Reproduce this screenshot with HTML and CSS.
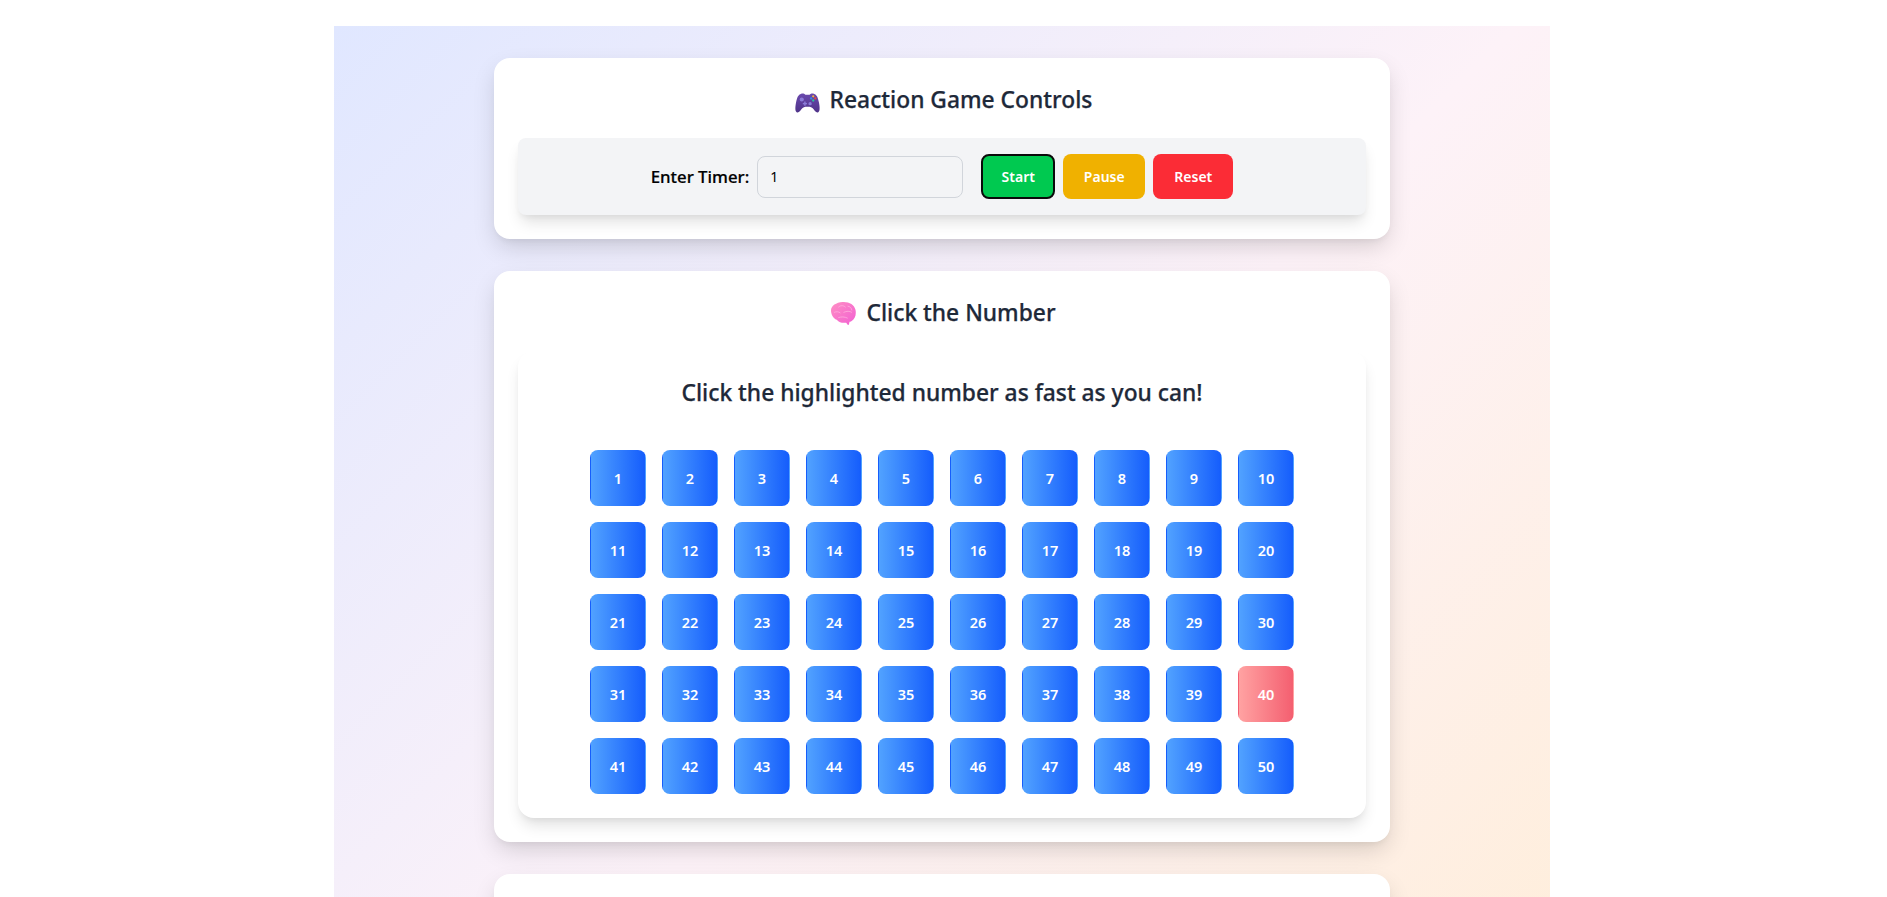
FILE: index.html
```html
<!DOCTYPE html>
<html lang="en">
<head>
<meta charset="utf-8">
<title>Reaction Game</title>
<link rel="stylesheet" href="styles.css">
</head>
<body>
<main class="page">
  <section class="card">
    <h2 class="title">
      <svg class="emoji" viewBox="0 0 24 24" aria-hidden="true">
        <defs>
          <linearGradient id="padFill" x1="0" y1="0" x2="0" y2="1">
            <stop offset="0" stop-color="#6a49ad"/>
            <stop offset="1" stop-color="#4f3389"/>
          </linearGradient>
        </defs>
        <path fill="url(#padFill)" d="M6 5.500C7.500 5 9 5.500 10 6.500h4C15 5.500 16.500 5 18 5.500C21 6.500 22 9 23 14C24 19 24 23 22 23.500C20 24 18.500 21 17 19.500C16 18.500 15 18 14 18h-4C9 18 8 18.500 7 19.500C5.500 21 4 24 2 23.500C0 23 0 19 1 14C2 9 3 6.500 6 5.500z"/>
        <circle cx="6.500" cy="11" r="2" fill="#8b7bd8"/>
        <circle cx="14.500" cy="15" r="1.600" fill="#8b7bd8"/>
        <rect x="7.500" y="14.300" width="4" height="1.400" fill="#8b7bd8"/>
        <rect x="8.800" y="13" width="1.400" height="4" fill="#8b7bd8"/>
        <circle cx="17.500" cy="8" r="1.100" fill="#f2b53c"/>
        <circle cx="15.500" cy="10" r="1.100" fill="#2f8fe8"/>
        <circle cx="19.500" cy="10" r="1.100" fill="#e8473f"/>
        <circle cx="17.500" cy="12" r="1.100" fill="#27c2a0"/>
      </svg>
      <span>Reaction Game Controls</span>
    </h2>
    <div class="controls">
      <label class="timer-label" for="timer">Enter Timer:</label>
      <input class="timer-input" id="timer" type="text" value="1">
      <button class="btn btn-start">Start</button>
      <button class="btn btn-pause">Pause</button>
      <button class="btn btn-reset">Reset</button>
    </div>
  </section>
  <section class="card">
    <h2 class="title">
      <svg class="emoji" viewBox="0 0 24 24" aria-hidden="true">
        <defs>
          <linearGradient id="brainFill" x1="0" y1="0" x2="1" y2="1">
            <stop offset="0" stop-color="#ff8fc4"/>
            <stop offset="1" stop-color="#f25fd2"/>
          </linearGradient>
        </defs>
        <path fill="url(#brainFill)" d="M11 1C17 .5 22.500 3.500 23.500 8.500C24.500 13 23 17.500 19.500 19.500C18.800 20 18.200 20 17.800 20L17.200 22.500C16.800 23.200 16 23 15.600 22.300L14.600 20.800C11 21.300 8 20.800 5.500 18C2 16.500 0 12.500 0 9C0 4.500 5 1.500 11 1z"/>
        <path fill="none" stroke="#ffb3df" stroke-width=".7" d="M7 6c2-2 5-2 7 0M16 5c2 0 4 2 4 4M3 11c2-1 4-1 6 .5M12 11c3-1.500 6-1.500 8 0M7 16c3-1 6-1 9 .5"/>
      </svg>
      <span>Click the Number</span>
    </h2>
    <div class="game">
      <h3 class="prompt">Click the highlighted number as fast as you can!</h3>
      <div class="grid" id="grid"></div>
    </div>
  </section>
  <section class="card card-cut"></section>
</main>
<script src="grid.js"></script>
</body>
</html>
```

FILE: grid.js
```js
var grid = document.getElementById('grid');
for (var i = 1; i <= 50; i++) {
  var b = document.createElement('button');
  b.className = i === 40 ? 'cell cell-hot' : 'cell';
  b.textContent = i;
  grid.appendChild(b);
}
```

FILE: styles.css
```css
* { box-sizing: border-box; }
html, body { height: 100%; overflow: hidden; }
body {
  margin: 0;
  background: #fff;
  font-family: "Noto Sans", "Open Sans", sans-serif;
  padding: 26px 337px 0 334px;
}
.page {
  height: 1150px;
  padding: 32px 160px;
  background: linear-gradient(135deg, #e0e7ff 0%, #fdf2f8 50%, #ffedd5 100%);
  display: flex;
  flex-direction: column;
  gap: 32px;
}
.card {
  background: #fff;
  border-radius: 16px;
  padding: 24px;
  box-shadow: 0 10px 25px -3px rgba(0,0,0,.16), 0 4px 6px -2px rgba(0,0,0,.05);
}
.title {
  margin: 0 0 20px;
  height: 36px;
  display: flex;
  align-items: center;
  justify-content: center;
  gap: 10px;
  font-size: 22.800px;
  line-height: 34px;
  font-weight: 500;
  -webkit-text-stroke: .25px #1e2939;
  color: #1e2939;
}
.emoji { width: 25px; height: 25px; flex: none; margin: 1px 0 0 3px; }
.controls {
  height: 77px;
  background: #f3f4f6;
  border-radius: 8px;
  box-shadow: 0 10px 15px -3px rgba(0,0,0,.12), 0 4px 6px -2px rgba(0,0,0,.05);
  display: flex;
  align-items: center;
  justify-content: center;
}
.timer-label { font-size: 16.800px; font-weight: 500; color: #000; margin-right: 8px; -webkit-text-stroke: .2px #000; }
.timer-input {
  width: 206px;
  height: 42px;
  margin-right: 18px;
  padding: 0 12px;
  border: 1px solid #d1d5db;
  border-radius: 8px;
  background: #f3f4f6;
  font: 14px "Noto Sans", sans-serif;
  color: #000;
}
.btn {
  height: 45px;
  padding: 0;
  margin-right: 8px;
  border: 0;
  border-radius: 8px;
  color: #fff;
  font: 600 14px "Noto Sans", sans-serif;
}
.btn-start { width: 74px; background: #00c950; border: 2px solid #0a0a0a; }
.btn-pause { width: 82px; background: #f0b100; }
.btn-reset { width: 80px; margin-right: 0; background: #fb2c36; }
.game {
  background: #fff;
  border-radius: 16px;
  padding: 24px;
  box-shadow: 0 10px 15px -3px rgba(0,0,0,.12), 0 4px 6px -2px rgba(0,0,0,.05);
}
.prompt {
  margin: 0 0 39px;
  text-align: center;
  font-size: 22.800px;
  line-height: 36px;
  font-weight: 500;
  -webkit-text-stroke: .25px #1e2939;
  color: #1e2939;
}
.grid {
  display: grid;
  grid-template-columns: repeat(10, 56px);
  grid-auto-rows: 56px;
  gap: 16px;
  justify-content: center;
}
.cell {
  border: 1px solid transparent;
  border-radius: 8px;
  padding: 0;
  color: #fff;
  font: 600 14.500px "Noto Sans", sans-serif;
  background: linear-gradient(to right, #51a2ff, #155dfc);
}
.cell-hot { background: linear-gradient(to right, #ffa2a2, #f45f70); }
.card-cut { height: 200px; flex: none; }
```
